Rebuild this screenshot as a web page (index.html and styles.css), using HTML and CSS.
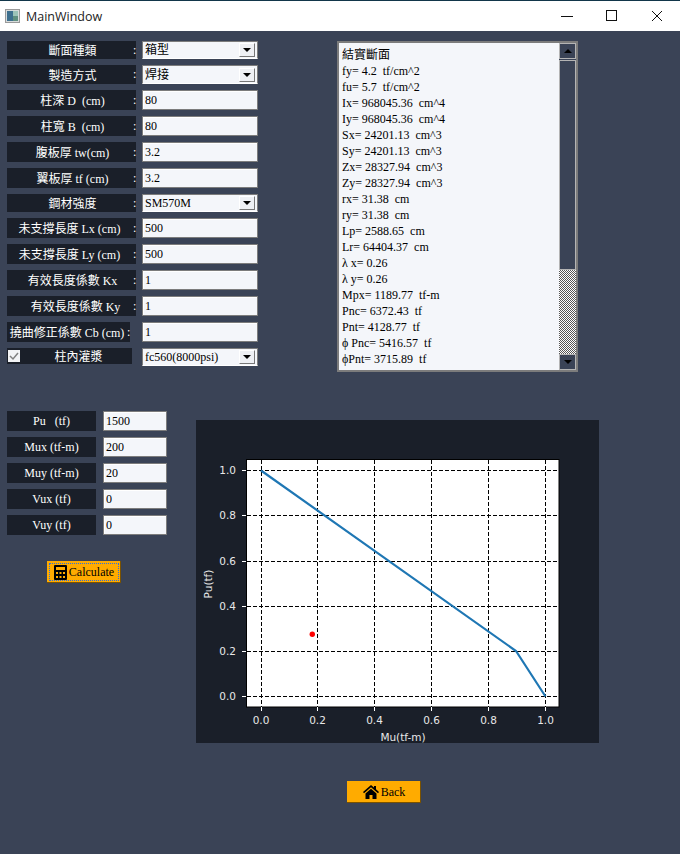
FILE: index.html
```html
<!DOCTYPE html>
<html lang="zh-Hant">
<head>
    <meta charset="UTF-8">
    <title>MainWindow</title>
    <link rel="stylesheet" href="styles.css">
</head>
<body>
    <div class="window">
        <div class="titlebar">
            <svg class="app-icon" width="15" height="14" viewBox="0 0 15 14">
                <rect x="0.5" y="0.5" width="14" height="13" fill="#d8dcdc" stroke="#9a9a9a"/>
                <rect x="2" y="2" width="6" height="10" fill="#3d6f8e"/>
                <rect x="8" y="2" width="5" height="5" fill="#9cc3b8"/>
                <rect x="8" y="7" width="5" height="5" fill="#5f8f7f"/>
            </svg>
            <span class="title">MainWindow</span>
            <div class="controls">
                <svg width="12" height="12" viewBox="0 0 12 12"><path d="M0 6.500H12" stroke="#111" fill="none"/></svg>
                <svg width="12" height="12" viewBox="0 0 12 12"><rect x="0.500" y="0.500" width="10" height="10" stroke="#111" fill="none"/></svg>
                <svg width="12" height="12" viewBox="0 0 12 12"><path d="M1 1L11 11M11 1L1 11" stroke="#111" fill="none"/></svg>
            </div>
        </div>

        <div class="top">
            <form class="form">
                <div class="row short">
                    <div class="label"><span class="name">斷面種類</span><span class="colon">:</span></div>
                    <div class="combo"><select><option>箱型</option></select><span class="arrow"></span></div>
                </div>
                <div class="row mid">
                    <div class="label"><span class="name">製造方式</span><span class="colon">:</span></div>
                    <div class="combo"><select><option>焊接</option></select><span class="arrow"></span></div>
                </div>
                <div class="row">
                    <div class="label"><span class="name">柱深 D&nbsp; (cm)</span><span class="colon">:</span></div>
                    <input type="text" value="80">
                </div>
                <div class="row">
                    <div class="label"><span class="name">柱寬 B&nbsp; (cm)</span><span class="colon">:</span></div>
                    <input type="text" value="80">
                </div>
                <div class="row">
                    <div class="label"><span class="name">腹板厚 tw(cm)</span><span class="colon">:</span></div>
                    <input type="text" value="3.2">
                </div>
                <div class="row">
                    <div class="label"><span class="name">翼板厚 tf (cm)</span><span class="colon">:</span></div>
                    <input type="text" value="3.2">
                </div>
                <div class="row short">
                    <div class="label"><span class="name">鋼材強度</span><span class="colon">:</span></div>
                    <div class="combo"><select><option>SM570M</option></select><span class="arrow"></span></div>
                </div>
                <div class="row">
                    <div class="label"><span class="name">未支撐長度 Lx (cm)&nbsp;&nbsp;</span><span class="colon">:</span></div>
                    <input type="text" value="500">
                </div>
                <div class="row">
                    <div class="label"><span class="name">未支撐長度 Ly (cm)&nbsp;&nbsp;</span><span class="colon">:</span></div>
                    <input type="text" value="500">
                </div>
                <div class="row">
                    <div class="label"><span class="name">有效長度係數 Kx</span><span class="colon">:</span></div>
                    <input type="text" value="1">
                </div>
                <div class="row">
                    <div class="label"><span class="name">&nbsp;&nbsp;有效長度係數 Ky</span><span class="colon">:</span></div>
                    <input type="text" value="1">
                </div>
                <div class="row">
                    <div class="label wide"><span class="name">撓曲修正係數 Cb (cm)</span><span class="colon">:</span></div>
                    <input type="text" value="1">
                </div>
                <div class="row short last">
                    <div class="label check">
                        <span class="box"><svg width="10" height="10" viewBox="0 0 10 10"><path d="M1 5L4 8L9 2" stroke="#808080" stroke-width="1.500" fill="none"/></svg></span>
                        <span class="name">柱內灌漿</span>
                    </div>
                    <div class="combo"><select><option>fc560(8000psi)</option></select><span class="arrow"></span></div>
                </div>
            </form>

            <div class="result">
                <div class="result-text">
                    <div>結實斷面</div>
                    <div>fy= 4.2  tf/cm^2</div>
                    <div>fu= 5.7  tf/cm^2</div>
                    <div>Ix= 968045.36  cm^4</div>
                    <div>Iy= 968045.36  cm^4</div>
                    <div>Sx= 24201.13  cm^3</div>
                    <div>Sy= 24201.13  cm^3</div>
                    <div>Zx= 28327.94  cm^3</div>
                    <div>Zy= 28327.94  cm^3</div>
                    <div>rx= 31.38  cm</div>
                    <div>ry= 31.38  cm</div>
                    <div>Lp= 2588.65  cm</div>
                    <div>Lr= 64404.37  cm</div>
                    <div>λ x= 0.26</div>
                    <div>λ y= 0.26</div>
                    <div>Mpx= 1189.77  tf-m</div>
                    <div>Pnc= 6372.43  tf</div>
                    <div>Pnt= 4128.77  tf</div>
                    <div>ϕ Pnc= 5416.57  tf</div>
                    <div>ϕPnt= 3715.89  tf</div>
                    <div>ϕ Mpx= 1100.55  tf-m</div>
                </div>
                <div class="scrollbar">
                    <div class="step"><span class="tri up"></span></div>
                    <div class="thumb"></div>
                    <div class="trough"></div>
                    <div class="step"><span class="tri"></span></div>
                </div>
            </div>
        </div>

        <div class="bottom">
            <div class="loads">
                <div class="load-row"><div class="label small">Pu&nbsp;&nbsp; (tf)</div><input type="text" value="1500"></div>
                <div class="load-row"><div class="label small">Mux (tf-m)</div><input type="text" value="200"></div>
                <div class="load-row"><div class="label small">Muy (tf-m)</div><input type="text" value="20"></div>
                <div class="load-row"><div class="label small">Vux (tf)</div><input type="text" value="0"></div>
                <div class="load-row"><div class="label small">Vuy (tf)</div><input type="text" value="0"></div>
                <button type="button" class="btn calc">
                    <svg width="13" height="15" viewBox="0 0 13 15">
                        <path fill="#000" fill-rule="evenodd" d="M1 0H12Q13 0 13 1V14Q13 15 12 15H1Q0 15 0 14V1Q0 0 1 0ZM2 2V5H11V2ZM2 7V9H4V7ZM5.500 7V9H7.500V7ZM9 7V9H11V7ZM2 11V13H4V11ZM5.500 11V13H7.500V11ZM9 11V13H11V11Z"/>
                    </svg>
                    Calculate
                </button>
            </div>

            <div class="chart">
                <svg width="403" height="323" viewBox="196 420 403 323">
                    <rect x="246.500" y="459.500" width="312.500" height="247.500" fill="#fff" stroke="#000"/>
                    <g class="grid">
                        <path d="M261.500 460V707M317.500 460V707M374.500 460V707M431.500 460V707M488.500 460V707M545.500 460V707"/>
                        <path d="M247 470.500H559M247 515.500H559M247 561.500H559M247 606.500H559M247 651.500H559M247 696.500H559"/>
                    </g>
                    <path class="ticks" d="M261.500 707v4M317.500 707v4M374.500 707v4M431.500 707v4M488.500 707v4M545.500 707v4M246 470.500h-4M246 515.500h-4M246 561.500h-4M246 606.500h-4M246 651.500h-4M246 696.500h-4"/>
                    <polyline class="curve" points="261,470.500 516,651 545.500,696.500"/>
                    <circle cx="312.300" cy="634.300" r="2.700" fill="#ff0000"/>
                    <g class="tick-x">
                        <text x="261" y="724">0.0</text>
                        <text x="317.500" y="724">0.2</text>
                        <text x="374.500" y="724">0.4</text>
                        <text x="431.500" y="724">0.6</text>
                        <text x="488.500" y="724">0.8</text>
                        <text x="545.500" y="724">1.0</text>
                    </g>
                    <g class="tick-y">
                        <text x="236" y="474">1.0</text>
                        <text x="236" y="519">0.8</text>
                        <text x="236" y="565">0.6</text>
                        <text x="236" y="610">0.4</text>
                        <text x="236" y="655">0.2</text>
                        <text x="236" y="700">0.0</text>
                    </g>
                    <text class="axis" x="403" y="741" text-anchor="middle">Mu(tf-m)</text>
                    <text class="axis" transform="translate(212 584) rotate(-90)" text-anchor="middle">Pu(tf)</text>
                </svg>
            </div>
        </div>

        <button type="button" class="btn back">
            <svg width="16" height="14" viewBox="0 0 16 14">
                <path fill="#000" d="M8 0L11 2.600V1H13V4.300L16 7L15 8.200L8 2.200L1 8.200L0 7ZM2.500 8.500L8 3.800L13.500 8.500V14H9.500V10H6.500V14H2.500Z"/>
            </svg>
            Back
        </button>
    </div>
</body>
</html>
```

FILE: styles.css
```css
* {
    box-sizing: border-box;
}

html,
body {
    margin: 0;
    padding: 0;
}

body {
    font-family: "Liberation Serif", "Noto Sans CJK TC", serif;
    font-size: 12px;
    background-color: #3a4356;
}

.window {
    width: 680px;
    height: 854px;
    overflow: hidden;
    background-color: #3a4356;
}

/* title bar */
.titlebar {
    height: 31px;
    display: flex;
    align-items: center;
    padding-left: 5px;
    background-color: #fff;
    border-top: 1px solid #12364a;
}

.app-icon {
    margin-top: -1px;
}

.title {
    margin-left: 6px;
    font-family: "Open Sans", sans-serif;
    font-size: 12.500px;
    color: #222;
}

.controls {
    margin-left: auto;
    display: flex;
    gap: 33px;
    padding-right: 17px;
}

/* top part */
.top {
    display: flex;
    align-items: flex-start;
    padding: 10px 0 0 7px;
}

.form {
    width: 251px;
    display: flex;
    flex-direction: column;
    gap: 6px;
}

.row {
    display: flex;
    justify-content: space-between;
    height: 20px;
}

.row.short {
    height: 18px;
}

.row.mid {
    height: 19px;
}

.label {
    width: 129px;
    display: flex;
    align-items: center;
    background-color: #1a1f29;
    color: #fff;
}

.label .name {
    flex: 1;
    padding-left: 5px;
    text-align: center;
    white-space: nowrap;
}

.label .colon {
    width: 3px;
}

.label.wide {
    width: 123px;
}

.label.wide .name {
    padding-left: 0;
}

.label.check {
    width: 125px;
    height: 16px;
}

.label.check .name {
    padding-left: 5px;
}

.box {
    width: 12px;
    height: 12px;
    margin-left: 1px;
    display: flex;
    align-items: center;
    justify-content: center;
    background-color: #f2f3f5;
}

input[type="text"] {
    width: 116px;
    height: 100%;
    padding: 0 0 0 2px;
    font-family: "Liberation Serif", serif;
    font-size: 12px;
    color: #000;
    background-color: #f4f6fa;
    border: 1px solid #7c7c7c;
    box-shadow: inset 1px 1px 0 #fff;
    outline: none;
}

.combo {
    width: 116px;
    height: 100%;
    display: flex;
    align-items: center;
    padding-right: 2px;
    background-color: #f4f6fa;
    border: 1px solid #7c7c7c;
    border-bottom-color: #fff;
}

.combo select {
    flex: 1;
    min-width: 0;
    height: 100%;
    padding: 0 0 0 2px;
    font-family: "Liberation Serif", "Noto Sans CJK TC", serif;
    font-size: 12px;
    color: #000;
    background: transparent;
    border: none;
    appearance: none;
    outline: none;
}

.arrow {
    position: relative;
    width: 16px;
    height: 14px;
    background-color: #eef0f4;
    border: 1px solid #fff;
    border-right-color: #777;
    border-bottom-color: #777;
}

.arrow::after {
    content: "";
    position: absolute;
    left: 3px;
    top: 4px;
    border-left: 4px solid transparent;
    border-right: 4px solid transparent;
    border-top: 4px solid #000;
}

/* result box */
.result {
    width: 241px;
    height: 331px;
    margin-left: 79px;
    display: flex;
    background-color: #f4f6fa;
    border: 2px solid #7c7c7c;
}

.result-text {
    flex: 1;
    overflow: hidden;
    padding: 4px 0 0 3px;
    line-height: 16px;
    color: #000;
}

.result-text div {
    white-space: pre;
}

.scrollbar {
    width: 17px;
    display: flex;
    flex-direction: column;
    background-color: #3a4356;
}

.step {
    height: 16px;
    flex: none;
    display: flex;
    align-items: center;
    justify-content: center;
    border: 1px solid #b4b4b4;
}

.tri {
    border-left: 4px solid transparent;
    border-right: 4px solid transparent;
    border-top: 4px solid #000;
}

.tri.up {
    border-top: none;
    border-bottom: 4px solid #000;
}

.thumb {
    height: 210px;
    flex: none;
    margin-top: 1px;
    border: 1px solid #b4b4b4;
}

.trough {
    flex: 1;
    background-color: #fff;
    background-image: repeating-conic-gradient(#555 0 25%, #fff 0 50%);
    background-size: 2px 2px;
}

/* bottom part */
.bottom {
    display: flex;
    align-items: flex-start;
    padding: 39px 0 0 7px;
}

.loads {
    width: 160px;
    display: flex;
    flex-direction: column;
    gap: 6px;
}

.load-row {
    height: 20px;
    display: flex;
    justify-content: space-between;
}

.label.small {
    width: 89px;
    justify-content: center;
    white-space: pre;
}

.load-row input[type="text"] {
    width: 64px;
}

.btn {
    width: 74px;
    height: 22px;
    display: flex;
    align-items: center;
    justify-content: center;
    gap: 2px;
    padding: 0;
    font-family: "Liberation Serif", serif;
    font-size: 12px;
    color: #000;
    background-color: #ffab00;
    border: none;
    box-shadow: inset -1px -1px 0 #7a5200;
}

.calc {
    margin: 20px 0 0 40px;
    outline: 1px dotted #2a6fe0;
    outline-offset: -3px;
}

.chart {
    width: 403px;
    height: 323px;
    margin: 9px 0 0 29px;
    background-color: #1a1f29;
}

.chart svg {
    display: block;
}

.grid path {
    stroke: #000;
    stroke-width: 1;
    stroke-dasharray: 4 2;
    fill: none;
}

.ticks {
    stroke: #fff;
    fill: none;
}

.curve {
    stroke: #1f77b4;
    stroke-width: 2.200;
    fill: none;
}

.chart text {
    font-family: "DejaVu Sans", sans-serif;
    font-size: 10.500px;
    fill: #e8e8e8;
}

.tick-x text {
    text-anchor: middle;
}

.tick-y text {
    text-anchor: end;
}

.back {
    margin: 38px 0 0 347px;
}
```
